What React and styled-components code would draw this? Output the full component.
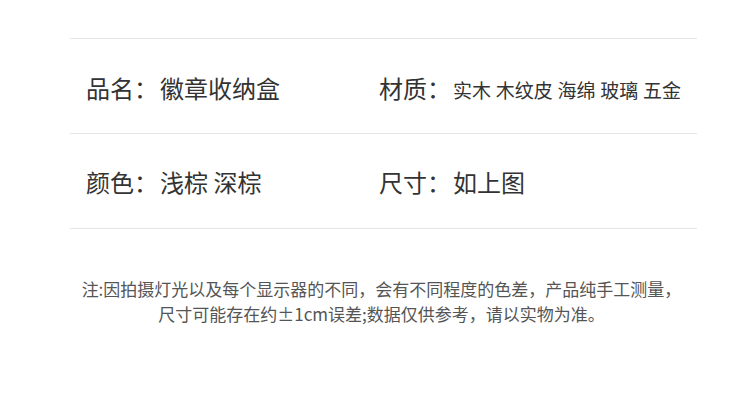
import React from "react";
import styled, { createGlobalStyle } from "styled-components";

const GlobalStyle = createGlobalStyle`
  body {
    margin: 0;
    background: #fff;
    font-family: "Noto Sans CJK SC", "Noto Sans", sans-serif;
  }
`;

const Page = styled.div`
  width: 750px;
  height: 414px;
  padding-top: 38px;
  box-sizing: border-box;
  background: #fff;
`;

const Table = styled.div`
  margin-left: 70px;
  width: 627px;
  border-top: 1px solid #e6e6e6;
`;

const Row = styled.div`
  display: grid;
  grid-template-columns: 293px 1fr;
  height: 95px;
  align-items: center;
  border-bottom: 1px solid #e6e6e6;
  box-sizing: border-box;
`;

const Cell = styled.div`
  display: flex;
  align-items: baseline;
  padding-left: 16px;
  padding-top: ${(p) => (p.$first ? 2 : 0)}px;
  color: #333;
  white-space: nowrap;
`;

const Label = styled.span`
  font-size: 24px;
  margin-right: 2px;
`;

const Value = styled.span`
  font-size: ${(p) => (p.$small ? 19 : 24)}px;
  word-spacing: ${(p) => (p.$small ? 0.5 : 0)}px;
`;

const Note = styled.div`
  margin-top: 47px;
  padding-left: 13px;
  text-align: center;
  color: #555;
  font-size: 17px;
  line-height: 25px;
`;

const rows = [
  [
    { label: "品名：", value: "徽章收纳盒" },
    { label: "材质：", value: "实木 木纹皮 海绵 玻璃 五金", small: true },
  ],
  [
    { label: "颜色：", value: "浅棕 深棕" },
    { label: "尺寸：", value: "如上图" },
  ],
];

const App = () => (
  <Page>
    <GlobalStyle />
    <Table>
      {rows.map((row, i) => (
        <Row key={i}>
          {row.map((c) => (
            <Cell key={c.label} $first={i === 0}>
              <Label>{c.label}</Label>
              <Value $small={c.small}>{c.value}</Value>
            </Cell>
          ))}
        </Row>
      ))}
    </Table>
    <Note>
      注:因拍摄灯光以及每个显示器的不同，会有不同程度的色差，产品纯手工测量，
      <br />
      尺寸可能存在约±1cm误差;数据仅供参考，请以实物为准。
    </Note>
  </Page>
);

export default App;
